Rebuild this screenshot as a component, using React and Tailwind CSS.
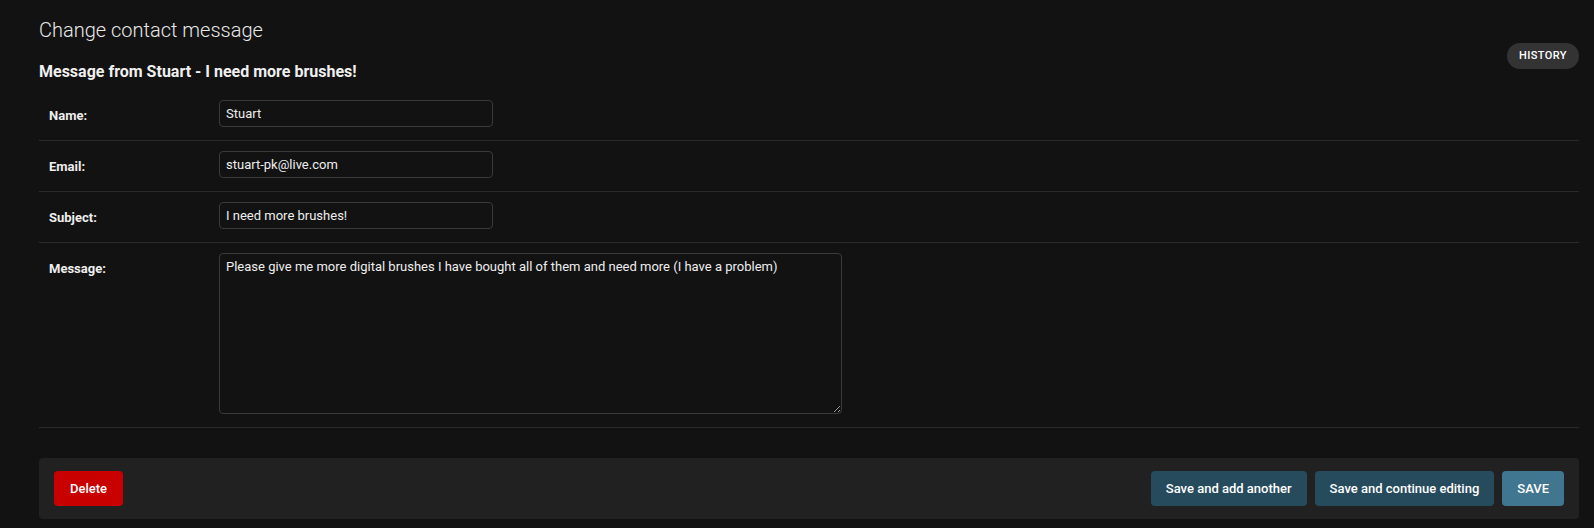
import React from 'react';

const fields = [
  { label: 'Name:', value: 'Stuart' },
  { label: 'Email:', value: 'stuart-pk@live.com' },
  { label: 'Subject:', value: 'I need more brushes!' },
];

const FieldRow = ({ label, children }) => (
  <div className="flex px-[10px] pt-[10px] pb-[13px] border-b border-[#2a2a2a]">
    <label className="w-[160px] mr-[10px] pt-[8px] text-[13px] leading-[16px] font-bold text-[#eeeeee]">{label}</label>
    {children}
  </div>
);

const App = () => {
  return (
    <div className="min-h-screen bg-[#121212] font-['Roboto',sans-serif] pl-[39px] pr-[15px] pt-[16px] pb-[10px] text-[#eeeeee]">
      <div className="flex justify-between items-start">
        <div>
          <h1 className="text-[20px] leading-[28px] font-light text-[#e8e8e8]">Change contact message</h1>
          <h2 className="mt-[18px] text-[16px] leading-[19px] font-bold text-[#f0f0f0]">
            Message from Stuart - I need more brushes!
          </h2>
        </div>
        <a
          href="#"
          className="mt-[27px] h-[26px] px-[12px] rounded-full bg-[#333333] text-white text-[11px] uppercase tracking-[0.4px] font-medium flex items-center"
        >
          History
        </a>
      </div>

      <div className="mt-[9px]">
        {fields.map((f) => (
          <FieldRow key={f.label} label={f.label}>
            <input
              type="text"
              defaultValue={f.value}
              className="w-[274px] h-[27px] px-[6px] bg-[#121212] border border-[#3a3a3a] rounded-[4px] text-[13px] text-[#eeeeee] outline-none"
            />
          </FieldRow>
        ))}
        <FieldRow label="Message:">
          <textarea
            defaultValue="Please give me more digital brushes I have bought all of them and need more (I have a problem)"
            className="w-[623px] h-[161px] px-[6px] py-[5px] bg-[#121212] border border-[#3a3a3a] rounded-[4px] text-[13px] leading-[16px] text-[#eeeeee] outline-none"
          />
        </FieldRow>
      </div>

      <div className="mt-[30px] bg-[#212121] rounded-[4px] px-[15px] py-[13px] flex justify-between items-center">
        <button className="h-[35px] px-[16px] rounded-[4px] bg-[#c80000] text-white text-[13px] font-medium">
          Delete
        </button>
        <div className="flex gap-[8px]">
          <button className="h-[35px] px-[15px] rounded-[4px] bg-[#264b5d] text-white text-[13px] font-medium">
            Save and add another
          </button>
          <button className="h-[35px] px-[15px] rounded-[4px] bg-[#264b5d] text-white text-[13px] font-medium">
            Save and continue editing
          </button>
          <button className="h-[35px] px-[15px] rounded-[4px] bg-[#417690] text-white text-[13px] font-medium">
            SAVE
          </button>
        </div>
      </div>
    </div>
  );
};

export default App;
